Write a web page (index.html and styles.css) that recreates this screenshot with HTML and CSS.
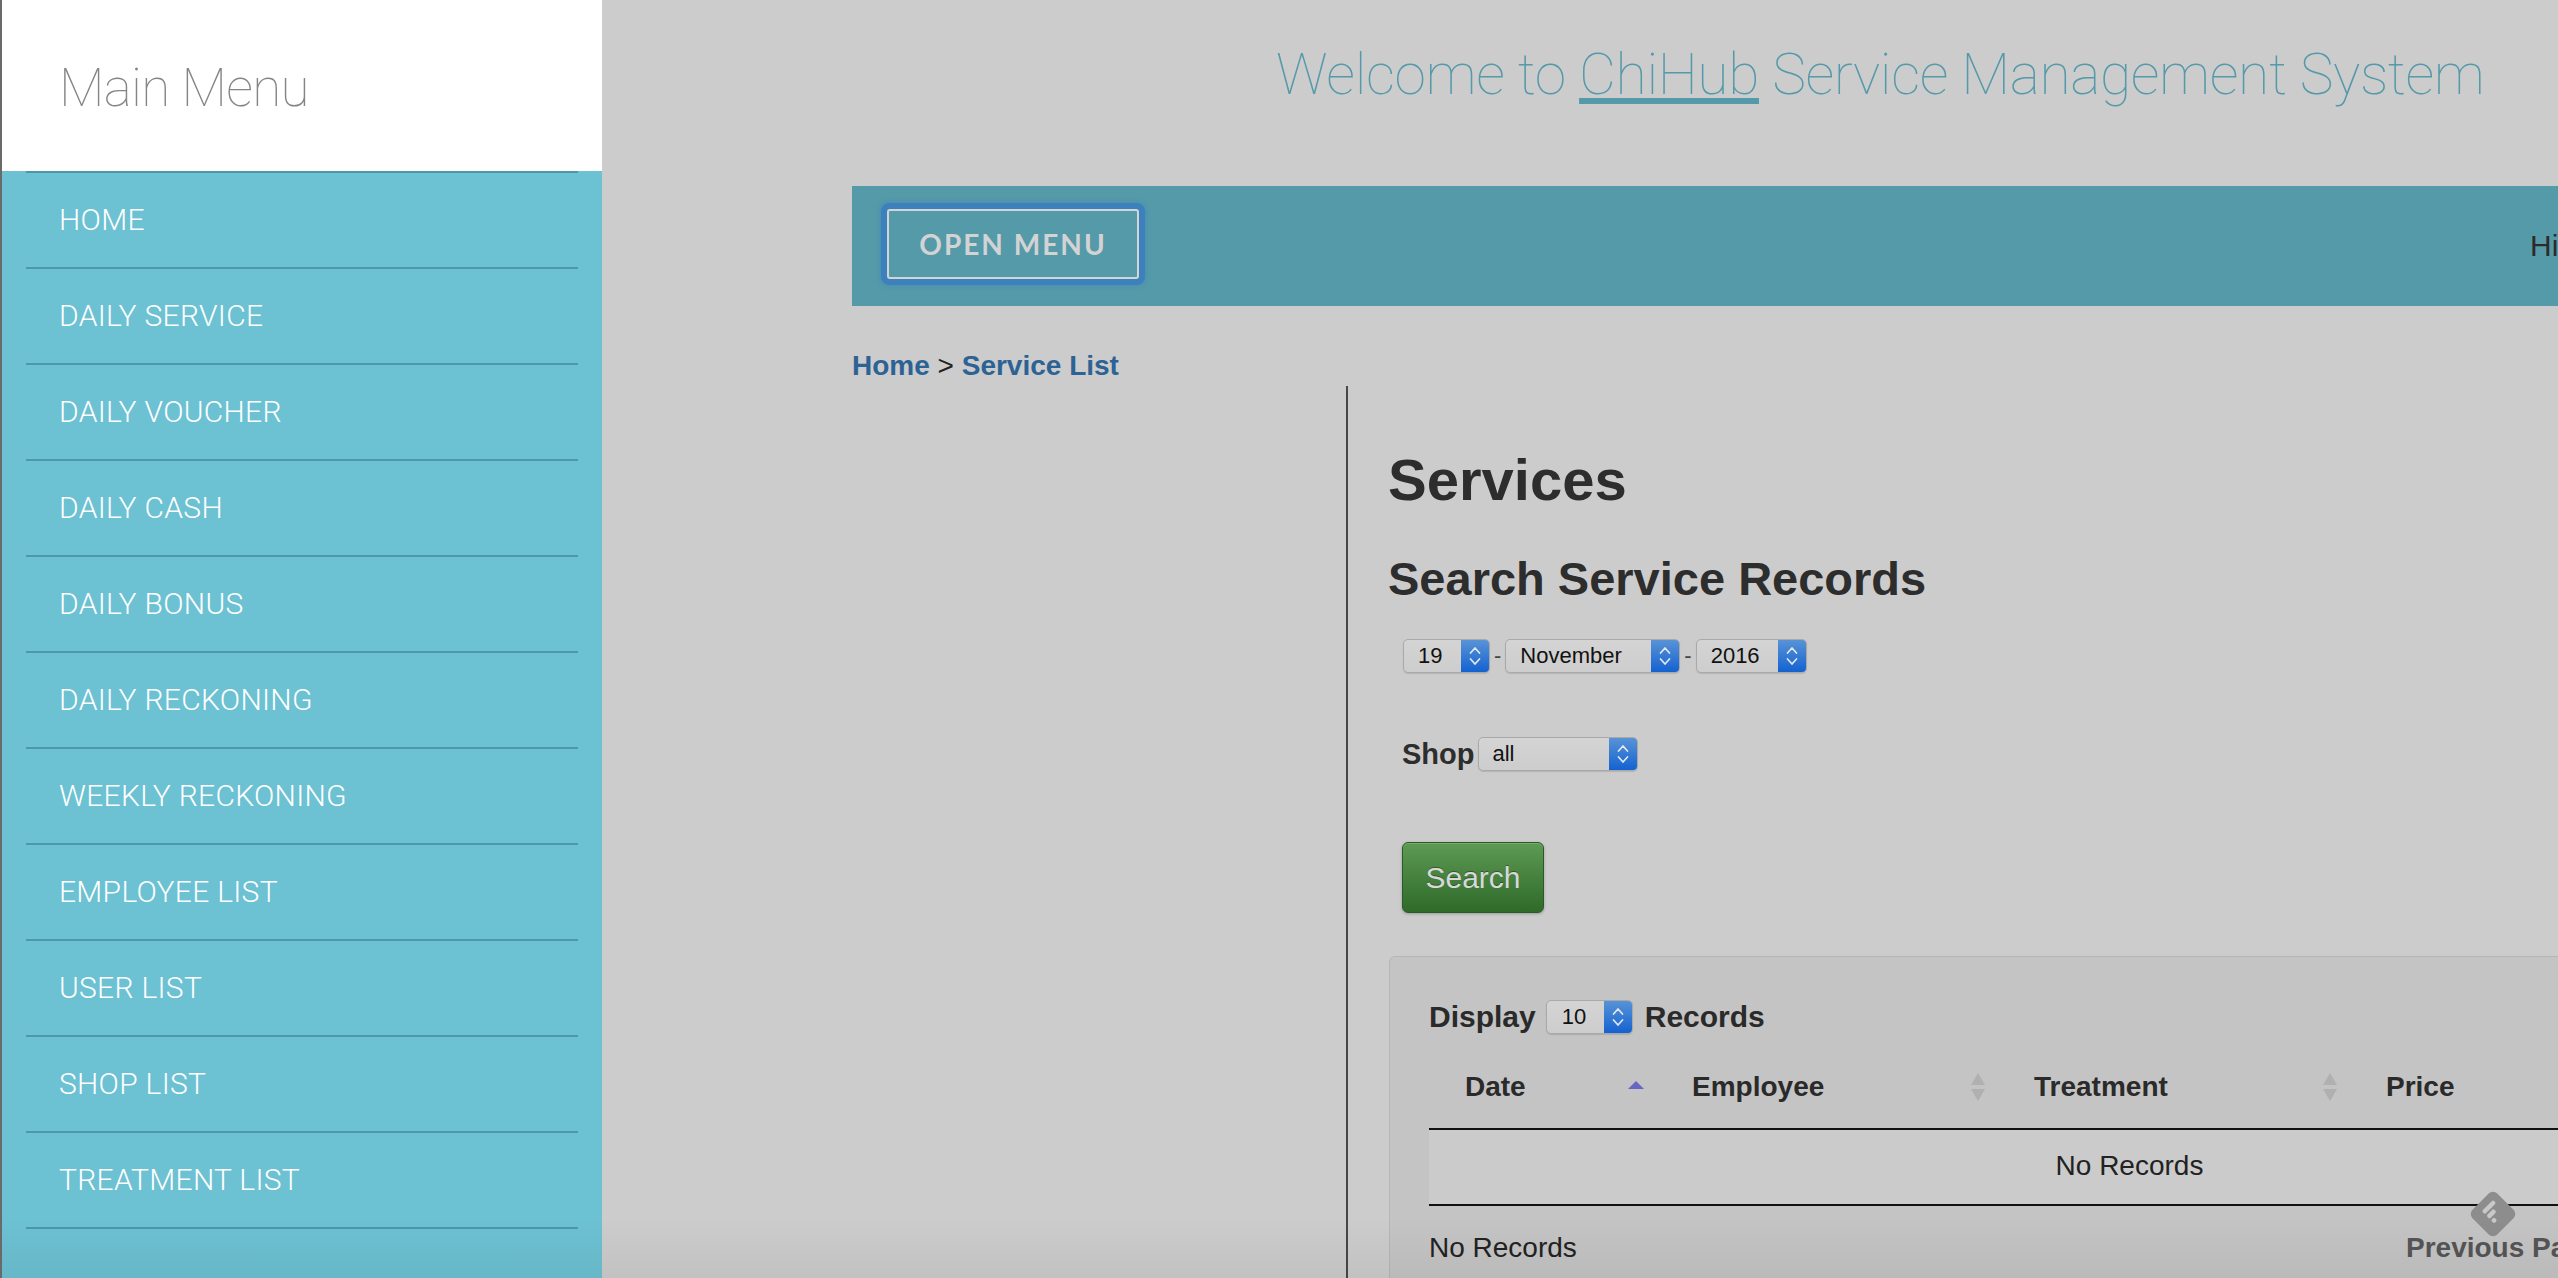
FILE: index.html
```html
<!DOCTYPE html>
<html lang="en">
<head>
<meta charset="utf-8">
<title>ChiHub Service Management System</title>
<link rel="stylesheet" href="styles.css">
</head>
<body>
<div class="window">
  <aside class="sidebar">
    <div class="sidebar-head">Main Menu</div>
    <ul class="menu">
      <li>HOME</li>
      <li>DAILY SERVICE</li>
      <li>DAILY VOUCHER</li>
      <li>DAILY CASH</li>
      <li>DAILY BONUS</li>
      <li>DAILY RECKONING</li>
      <li>WEEKLY RECKONING</li>
      <li>EMPLOYEE LIST</li>
      <li>USER LIST</li>
      <li>SHOP LIST</li>
      <li>TREATMENT LIST</li>
    </ul>
  </aside>

  <main class="main">
    <h1 class="welcome">Welcome to <a class="brand">ChiHub</a> Service Management System</h1>

    <div class="topbar">
      <button class="open-menu">OPEN MENU</button>
      <span class="greeting">Hi! Admin</span>
    </div>

    <nav class="crumbs"><a>Home</a><span class="sep"> &gt; </span><a>Service List</a></nav>

    <div class="content-row">
      <div class="left-col"></div>
      <section class="right-col">
        <h2 class="page-title">Services</h2>
        <h3 class="search-title">Search Service Records</h3>

        <div class="date-row">
          <div class="sel sel-day"><span class="sel-val">19</span><span class="sel-btn"><svg viewBox="0 0 12 24" width="12" height="24"><polyline points="1.5,9 6,4 10.5,9"/><polyline points="1.5,15 6,20 10.5,15"/></svg></span></div>
          <span class="dash">-</span>
          <div class="sel sel-month"><span class="sel-val">November</span><span class="sel-btn"><svg viewBox="0 0 12 24" width="12" height="24"><polyline points="1.5,9 6,4 10.5,9"/><polyline points="1.5,15 6,20 10.5,15"/></svg></span></div>
          <span class="dash">-</span>
          <div class="sel sel-year"><span class="sel-val">2016</span><span class="sel-btn"><svg viewBox="0 0 12 24" width="12" height="24"><polyline points="1.5,9 6,4 10.5,9"/><polyline points="1.5,15 6,20 10.5,15"/></svg></span></div>
        </div>

        <div class="shop-row">
          <label class="shop-label">Shop</label>
          <div class="sel sel-shop"><span class="sel-val">all</span><span class="sel-btn"><svg viewBox="0 0 12 24" width="12" height="24"><polyline points="1.5,9 6,4 10.5,9"/><polyline points="1.5,15 6,20 10.5,15"/></svg></span></div>
        </div>

        <button class="btn-search">Search</button>

        <div class="panel">
          <div class="length-row">
            <span>Display</span>
            <div class="sel sel-len"><span class="sel-val">10</span><span class="sel-btn"><svg viewBox="0 0 12 24" width="12" height="24"><polyline points="1.5,9 6,4 10.5,9"/><polyline points="1.5,15 6,20 10.5,15"/></svg></span></div>
            <span>Records</span>
          </div>

          <table class="dt">
            <colgroup>
              <col class="c-date"><col class="c-emp"><col class="c-treat"><col class="c-price">
            </colgroup>
            <thead>
              <tr>
                <th><div class="th-inner"><span>Date</span><svg class="sort-asc" viewBox="0 0 16 8" width="16" height="8"><polygon points="0,8 8,0 16,8"/></svg></div></th>
                <th><div class="th-inner"><span>Employee</span><svg class="sort-both" viewBox="0 0 16 30" width="16" height="30"><polygon points="1,13 8,1 15,13"/><polygon points="1,17 8,29 15,17"/></svg></div></th>
                <th><div class="th-inner"><span>Treatment</span><svg class="sort-both" viewBox="0 0 16 30" width="16" height="30"><polygon points="1,13 8,1 15,13"/><polygon points="1,17 8,29 15,17"/></svg></div></th>
                <th><div class="th-inner"><span>Price</span><svg class="sort-both" viewBox="0 0 16 30" width="16" height="30"><polygon points="1,13 8,1 15,13"/><polygon points="1,17 8,29 15,17"/></svg></div></th>
              </tr>
            </thead>
            <tbody>
              <tr><td colspan="4">No Records</td></tr>
            </tbody>
          </table>

          <div class="dt-footer">
            <div class="dt-info">No Records</div>
            <div class="dt-paginate"><span>Previous Page</span><span>Next Page</span></div>
          </div>
        </div>
      </section>
    </div>
  </main>

  <div class="feedly" aria-hidden="true">
    <svg viewBox="0 0 50 50" width="50" height="50">
      <g transform="rotate(45 25 25)">
        <rect x="7.5" y="7.5" width="35" height="35" rx="6" fill="#8d8d8d"/>
        <rect x="15" y="15" width="4.5" height="16" rx="1.8" fill="#c8c8c8"/>
        <rect x="21.5" y="21" width="4.5" height="10" rx="1.8" fill="#c8c8c8"/>
        <rect x="28" y="26.5" width="4.5" height="4.5" rx="1.8" fill="#c8c8c8"/>
      </g>
    </svg>
  </div>
  <div class="shade"></div>
</div>
</body>
</html>
```

FILE: styles.css
```css
html, body {
  margin: 0;
  padding: 0;
}

body {
  width: 2558px;
  height: 1278px;
  overflow: hidden;
  background: #cccccc;
  font-family: "Liberation Sans", Arial, sans-serif;
  color: #2d2d2d;
}

.window {
  position: relative;
  display: flex;
  height: 1278px;
  box-sizing: border-box;
  border-left: 2px solid #6a6a6a;
  overflow: hidden;
}

/* ---------- sidebar ---------- */
.sidebar {
  flex: none;
  width: 600px;
  background: #6cc1d2;
}

.sidebar-head {
  height: 171px;
  box-sizing: border-box;
  padding: 62px 0 0 57px;
  background: #ffffff;
  font-family: Roboto, "Liberation Sans", sans-serif;
  font-weight: 100;
  font-size: 53px;
  line-height: 53px;
  letter-spacing: -0.7px;
  color: #858585;
}

.menu {
  list-style: none;
  margin: 0 24px;
  padding: 0;
  border-top: 2px solid #4e97a8;
}

.menu li {
  height: 94px;
  padding-left: 33px;
  border-bottom: 2px solid #4e97a8;
  font-family: Roboto, "Liberation Sans", sans-serif;
  font-weight: 300;
  font-size: 30px;
  line-height: 94px;
  letter-spacing: 0.3px;
  color: #ffffff;
}

/* ---------- main ---------- */
.main {
  flex: 1;
  min-width: 0;
  overflow: hidden;
}

.welcome {
  margin: 0;
  height: 186px;
  box-sizing: border-box;
  padding: 46px 0 0 674px;
  font-family: Roboto, "Liberation Sans", sans-serif;
  font-weight: 100;
  font-size: 57px;
  line-height: 57px;
  letter-spacing: -0.4px;
  color: #559aaa;
  white-space: nowrap;
}

.brand {
  color: inherit;
  text-decoration: underline;
  text-decoration-thickness: 6px;
  text-underline-offset: 4px;
}

.topbar {
  display: flex;
  align-items: center;
  width: 2100px;
  height: 120px;
  margin-left: 250px;
  padding-left: 35px;
  box-sizing: border-box;
  background: #559aa9;
}

.open-menu {
  flex: none;
  width: 252px;
  height: 70px;
  margin-top: -4px;
  padding: 0;
  box-sizing: border-box;
  border: 2px solid #d4d4d4;
  border-radius: 3px;
  background: transparent;
  color: #d3d3d3;
  font-family: Lato, "Liberation Sans", sans-serif;
  font-weight: 700;
  font-size: 28px;
  line-height: 1;
  letter-spacing: 2px;
  box-shadow: 0 0 0 6px #3c80be, 0 0 4px 7px rgba(60, 128, 190, 0.45);
}

.greeting {
  flex: none;
  margin-left: 1391px;
  font-size: 30px;
  color: #2b2b2b;
  white-space: nowrap;
}

.crumbs {
  margin: 44px 0 0 250px;
  font-weight: 700;
  font-size: 28px;
  line-height: 32px;
  color: #222222;
}

.crumbs a {
  color: #2c6394;
}

.crumbs .sep {
  font-weight: 400;
}

.content-row {
  display: flex;
  margin: 4px 0 0 250px;
}

.left-col {
  flex: none;
  width: 494px;
}

.right-col {
  flex: none;
  width: 1600px;
  height: 900px;
  padding-left: 40px;
  border-left: 2px solid #474747;
}

.page-title {
  margin: 62px 0 0;
  font-size: 58px;
  line-height: 64px;
  font-weight: 700;
  color: #2d2d2d;
}

.search-title {
  margin: 41px 0 0;
  font-size: 47px;
  line-height: 52px;
  font-weight: 700;
  color: #2d2d2d;
}

/* ---------- mac style selects ---------- */
.sel {
  display: flex;
  flex: none;
  height: 34px;
  box-sizing: border-box;
  border: 1px solid #a9a9a9;
  border-radius: 5px;
  overflow: hidden;
  background: linear-gradient(#d4d4d4, #cdcdcd);
  box-shadow: 0 1px 1px rgba(0, 0, 0, 0.12);
  font-size: 22px;
  font-weight: 400;
  color: #111111;
}

.sel-val {
  flex: 1;
  padding-left: 14px;
  line-height: 32px;
  white-space: nowrap;
}

.sel-btn {
  flex: none;
  width: 28px;
  display: flex;
  align-items: center;
  justify-content: center;
  background: linear-gradient(#5893d6, #1462d1);
}

.sel-btn polyline {
  fill: none;
  stroke: #e4e8ee;
  stroke-width: 1.7;
  stroke-linecap: round;
  stroke-linejoin: round;
}

.sel-day { width: 87px; }
.sel-month { width: 175px; }
.sel-year { width: 111px; }
.sel-shop { width: 160px; }
.sel-len { width: 87px; }
.sel-len .sel-val { padding-left: 15px; }

.date-row {
  display: flex;
  align-items: center;
  margin: 34px 0 0 15px;
}

.dash {
  padding: 0 4px;
  font-size: 22px;
  color: #444444;
}

.shop-row {
  display: flex;
  align-items: center;
  margin: 64px 0 0 14px;
}

.shop-label {
  margin-right: 3px;
  font-weight: 700;
  font-size: 29px;
  line-height: 34px;
  color: #2d2d2d;
}

.btn-search {
  display: block;
  margin: 71px 0 0 14px;
  width: 142px;
  height: 71px;
  padding: 0;
  box-sizing: border-box;
  border: 1px solid #2b5a26;
  border-radius: 6px;
  background: linear-gradient(#5d9a54, #2f6a29);
  box-shadow: inset 0 1px 0 rgba(255, 255, 255, 0.18), 0 1px 3px rgba(0, 0, 0, 0.25);
  color: #d8d8d8;
  font-family: "Liberation Sans", Arial, sans-serif;
  font-size: 30px;
  text-shadow: 0 -1px 0 rgba(0, 0, 0, 0.35);
}

/* ---------- data table panel ---------- */
.panel {
  width: 1483px;
  height: 400px;
  margin: 43px 0 0 1px;
  padding: 42px 40px 0 39px;
  border: 1px solid #b6b6b6;
  border-radius: 6px;
  background: #c4c4c4;
}

.length-row {
  display: flex;
  align-items: center;
  height: 36px;
  font-weight: 700;
  font-size: 30px;
  line-height: 36px;
  color: #2a2a2a;
}

.length-row .sel-len {
  margin: 0 12px 0 10px;
}

.dt {
  width: 1401px;
  margin-top: 12px;
  table-layout: fixed;
  border-collapse: separate;
  border-spacing: 0;
}

.c-date { width: 227px; }
.c-emp { width: 342px; }
.c-treat { width: 352px; }
.c-price { width: 480px; }

.dt th {
  padding: 20px 12px 21px 36px;
  border-bottom: 2px solid #111111;
  text-align: left;
  font-weight: 700;
  font-size: 28px;
  line-height: 40px;
  color: #2a2a2a;
}

.th-inner {
  display: flex;
  align-items: center;
  justify-content: space-between;
}

.sort-asc {
  flex: none;
  margin-bottom: 5px;
  fill: #6666c4;
}

.sort-both {
  flex: none;
  fill: #b0b0b0;
}

.dt td {
  padding: 16px 0 18px;
  border-bottom: 2px solid #111111;
  background: #cbcbcb;
  text-align: center;
  font-size: 28px;
  line-height: 40px;
  color: #222222;
}

.dt-footer {
  display: grid;
  grid-template-columns: 977px auto;
  margin-top: 22px;
  font-size: 28px;
  line-height: 40px;
  color: #222222;
}

.dt-paginate {
  display: flex;
  gap: 30px;
  font-weight: 700;
  color: #555555;
  white-space: nowrap;
}

/* ---------- overlays ---------- */
.feedly {
  position: absolute;
  left: 2466px;
  top: 1189px;
  width: 50px;
  height: 50px;
}

.shade {
  position: absolute;
  left: 0;
  right: 0;
  bottom: 0;
  height: 60px;
  background: linear-gradient(rgba(0, 0, 0, 0), rgba(0, 0, 0, 0.05));
  pointer-events: none;
}
```
